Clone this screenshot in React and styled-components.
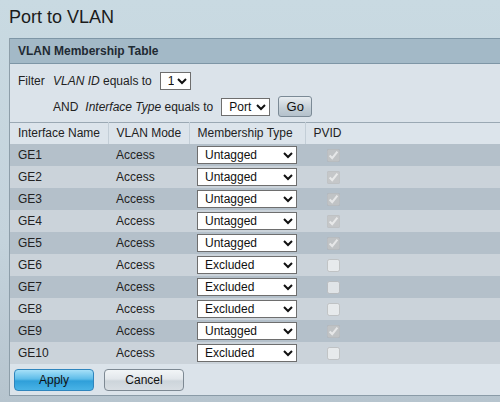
import React from "react";
import styled, { createGlobalStyle } from "styled-components";

const rows = [
  { name: "GE1", type: "Untagged" },
  { name: "GE2", type: "Untagged" },
  { name: "GE3", type: "Untagged" },
  { name: "GE4", type: "Untagged" },
  { name: "GE5", type: "Untagged" },
  { name: "GE6", type: "Excluded" },
  { name: "GE7", type: "Excluded" },
  { name: "GE8", type: "Excluded" },
  { name: "GE9", type: "Untagged" },
  { name: "GE10", type: "Excluded" },
];

const GlobalStyle = createGlobalStyle`
  html, body {
    margin: 0;
    height: 402px;
    overflow: hidden;
  }
  body {
    background: linear-gradient(to bottom, #c9dae2 0%, #c4d3dc 60%, #b6c4ce 100%);
    font-family: "Liberation Sans", Arial, sans-serif;
    color: #222;
  }
`;

const Page = styled.div`
  padding: 5px 0 0 9px;
`;

const Title = styled.h1`
  margin: 0;
  font-size: 18px;
  font-weight: normal;
  line-height: 24px;
  height: 33px;
  color: #1b1b1b;
`;

const Panel = styled.section`
  border-left: 1px solid #8d9ea9;
  border-bottom: 1px solid #8a9ba7;
  background: #dbe3ea;
  height: 357px;
`;

const PanelHeader = styled.div`
  height: 24px;
  line-height: 24px;
  background: #a3b9c7;
  border-top: 1px solid #7e96a6;
  border-bottom: 1px solid #7e96a6;
  padding-left: 8px;
  font-size: 12px;
  font-weight: bold;
  color: #1f2a33;
`;

const Filter = styled.div`
  display: grid;
  grid-template-columns: 35px auto;
  row-gap: 5px;
  padding: 6px 0 4px 8px;
  font-size: 12px;
`;

const FilterLine = styled.div`
  display: flex;
  align-items: center;
  gap: 7px;
  height: 21px;
  & > * {
    flex-shrink: 0;
  }
`;

const Label = styled.span`
  font-style: ${(p) => (p.$italic ? "italic" : "normal")};
`;

const Select = styled.select`
  font-family: "Liberation Sans", Arial, sans-serif;
  font-size: 12px;
  height: 18px;
  width: ${(p) => p.$w}px;
  padding: 0 0 0 3px;
  border: 1px solid #6e6e6e;
  border-radius: 0;
  background: #fff;
  color: #111;
  margin: 0 0 0 ${(p) => p.$gap || 0}px;
`;

const GoButton = styled.button`
  font-family: "Liberation Sans", Arial, sans-serif;
  font-size: 13px;
  width: 34px;
  height: 21px;
  margin-left: 1px;
  padding: 0;
  border: 1px solid #7b8a96;
  border-radius: 3px;
  background: linear-gradient(to bottom, #e8edf1, #c3ced6 60%, #b4c1cb);
  color: #111;
`;

const Table = styled.table`
  width: 100%;
  border-collapse: collapse;
  font-size: 12px;
  margin-top: 1px;
`;

const HeadCell = styled.th`
  text-align: left;
  font-weight: normal;
  height: 21px;
  padding: 0 0 0 8px;
  background: #dce4eb;
  border-top: 1px solid #9aa8b3;
  border-right: 1px solid #c3ced7;
  width: ${(p) => (p.$w ? `${p.$w}px` : "auto")};
  box-sizing: border-box;
  &:last-child {
    border-right: none;
  }
`;

const Row = styled.tr`
  background: ${(p) => (p.$dark ? "#b4c0ca" : "#cbd3da")};
  height: 22px;
`;

const Cell = styled.td`
  padding: 0 0 0 8px;
  height: 22px;
`;

const PvidBox = styled.input`
  margin: 0 0 0 14px;
  width: 13px;
  height: 13px;
  vertical-align: middle;
`;

const Buttons = styled.div`
  display: flex;
  gap: 10px;
  padding: 5px 0 0 4px;
  height: 26px;
`;

const ActionButton = styled.button`
  font-family: "Liberation Sans", Arial, sans-serif;
  font-size: 12px;
  width: 80px;
  height: 22px;
  padding: 0;
  border-radius: 4px;
  color: #111;
  border: 1px solid ${(p) => (p.$primary ? "#2f85bd" : "#7d8993")};
  background: ${(p) =>
    p.$primary
      ? "linear-gradient(to bottom, #a6e0f8 0%, #5dbce9 45%, #2f9fd9 55%, #49b3e6 100%)"
      : "linear-gradient(to bottom, #f2f5f7 0%, #e2e7eb 45%, #cdd5db 55%, #d8dee3 100%)"};
`;

export default function App() {
  return (
    <>
      <GlobalStyle />
      <Page>
        <Title>Port to VLAN</Title>
        <Panel>
          <PanelHeader>VLAN Membership Table</PanelHeader>
          <Filter>
            <FilterLine>Filter</FilterLine>
            <FilterLine>
              <span>
                <Label $italic>VLAN ID</Label> equals to
              </span>
              <Select $w={31} $gap={1} defaultValue="1">
                <option>1</option>
              </Select>
            </FilterLine>
            <span />
            <FilterLine>
              <span>AND</span>
              <span>
                <Label $italic>Interface Type</Label> equals to
              </span>
              <Select $w={49} $gap={1} defaultValue="Port">
                <option>Port</option>
                <option>LAG</option>
              </Select>
              <GoButton>Go</GoButton>
            </FilterLine>
          </Filter>
          <Table>
            <thead>
              <tr>
                <HeadCell $w={98}>Interface Name</HeadCell>
                <HeadCell $w={81}>VLAN Mode</HeadCell>
                <HeadCell $w={116}>Membership Type</HeadCell>
                <HeadCell>PVID</HeadCell>
              </tr>
            </thead>
            <tbody>
              {rows.map((r, i) => (
                <Row key={r.name} $dark={i % 2 === 0}>
                  <Cell>{r.name}</Cell>
                  <Cell>Access</Cell>
                  <Cell>
                    <Select $w={100} defaultValue={r.type}>
                      <option>Untagged</option>
                      <option>Tagged</option>
                      <option>Excluded</option>
                      <option>Forbidden</option>
                    </Select>
                  </Cell>
                  <Cell>
                    <PvidBox
                      type="checkbox"
                      disabled
                      defaultChecked={r.type === "Untagged"}
                    />
                  </Cell>
                </Row>
              ))}
            </tbody>
          </Table>
          <Buttons>
            <ActionButton $primary>Apply</ActionButton>
            <ActionButton>Cancel</ActionButton>
          </Buttons>
        </Panel>
      </Page>
    </>
  );
}
